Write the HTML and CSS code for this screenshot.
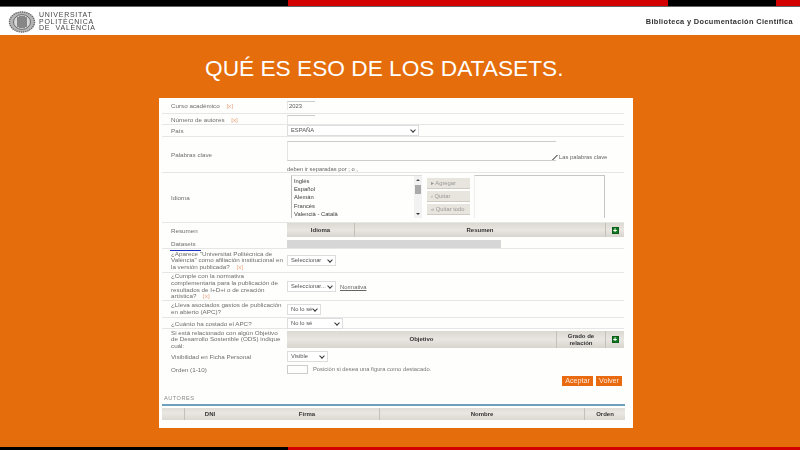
FILE: index.html
```html
<!DOCTYPE html>
<html lang="es">
<head>
<meta charset="utf-8">
<title>Qué es eso de los datasets</title>
<link rel="stylesheet" href="styles.css">
</head>
<body>
<div class="stripe stripe-top"><i class="s-black s1"></i><i class="s-red s2"></i><i class="s-black s3"></i><i class="s-red s4"></i></div>
<header class="brand">
  <svg class="seal" width="28" height="22" viewBox="0 0 28 22">
    <ellipse cx="14" cy="11" rx="13" ry="10.4" fill="#b5b5b5"/>
    <ellipse cx="14" cy="11" rx="12.5" ry="10" fill="none" stroke="#666" stroke-width="1.4" stroke-dasharray="1.2 1"/>
    <ellipse cx="14" cy="11" rx="8.5" ry="7.4" fill="#d8d8d8" stroke="#555" stroke-width=".8"/>
    <path d="M10 6v10M12 5v12M14 5v12M16 5v12M18 6v10" stroke="#444" stroke-width="1.1"/>
  </svg>
  <div class="wordmark"><span>UNIVERSITAT</span><span>POLITÈCNICA</span><span>DE &nbsp;VALÈNCIA</span></div>
  <div class="dept">Biblioteca y Documentación Científica</div>
</header>
<main class="slide">
  <h1>QUÉ ES ESO DE LOS DATASETS.</h1>
  <section class="panel">
    <div class="row h16"><div class="label">Curso académico <em>[x]</em></div><div class="field"><span class="input w28">2023</span></div></div>
    <div class="row h11"><div class="label">Número de autores <em>[x]</em></div><div class="field"><span class="input w28"></span></div></div>
    <div class="row h12"><div class="label">País</div><div class="field"><span class="select w132">ESPAÑA<b></b></span></div></div>
    <div class="row h36">
      <div class="label">Palabras clave</div>
      <div class="field stack">
        <div class="kw"><span class="area"></span><span class="kw-note">Las palabras clave</span></div>
        <span class="hint">deben ir separadas por ; o ,</span>
      </div>
    </div>
    <div class="row h50">
      <div class="label">Idioma</div>
      <div class="field lang">
        <div class="list">
          <div class="opts"><span>Inglés</span><span>Español</span><span>Alemán</span><span>Francés</span><span>Valencià - Català</span></div>
          <div class="scroll"><i></i></div>
        </div>
        <div class="moves"><span class="move">▸ Agregar</span><span class="move">‹ Quitar</span><span class="move">« Quitar todo</span></div>
        <div class="list-right"></div>
      </div>
    </div>
    <div class="row h15 flat">
      <div class="label">Resumen</div>
      <div class="thead">
        <span class="th c-idioma">Idioma</span><span class="th grow">Resumen</span><span class="th c-add"><span class="plus">+</span></span>
      </div>
    </div>
    <div class="row h11"><div class="label"><span class="ds">Datasets</span></div><div class="field"><span class="bar"></span></div></div>
    <div class="row h24"><div class="label tight">¿Aparece "Universitat Politècnica de<br>València" como afiliación institucional en<br>la versión publicada? <em>[x]</em></div><div class="field"><span class="select w49">Seleccionar<b></b></span></div></div>
    <div class="row h28"><div class="label tight">¿Cumple con la normativa<br>complementaria para la publicación de<br>resultados de I+D+i o de creación<br>artística? <em>[x]</em></div><div class="field gap4"><span class="select w49">Seleccionar...<b></b></span><a class="norm">Normativa</a></div></div>
    <div class="row h17"><div class="label tight">¿Lleva asociados gastos de publicación<br>en abierto (APC)?</div><div class="field"><span class="select w34">No lo sé<b></b></span></div></div>
    <div class="row h11"><div class="label">¿Cuánto ha costado el APC?</div><div class="field"><span class="select w56">No lo sé<b></b></span></div></div>
    <div class="row h21 flat">
      <div class="label tight">Si está relacionado con algún Objetivo<br>de Desarrollo Sostenible (ODS) indique<br>cuál:</div>
      <div class="thead tall">
        <span class="th grow">Objetivo</span><span class="th c-grado">Grado de relación</span><span class="th c-add"><span class="plus">+</span></span>
      </div>
    </div>
    <div class="row h12 plain"><div class="label">Visibilidad en Ficha Personal</div><div class="field"><span class="select w41">Visible<b></b></span></div></div>
    <div class="row h14 plain"><div class="label">Orden (1-10)</div><div class="field gap5"><span class="input-box"></span><span class="note">Posición si desea una figura como destacado.</span></div></div>
    <div class="actions"><span class="btn">Aceptar</span><span class="btn">Volver</span></div>
    <h2>AUTORES</h2>
    <div class="authors">
      <span class="ath a0"></span><span class="ath a1">DNI</span><span class="ath a2">Firma</span><span class="ath a3">Nombre</span><span class="ath a4">Orden</span>
    </div>
  </section>
</main>
<div class="stripe stripe-bottom"><i class="s-black s1"></i><i class="s-red grow"></i></div>
</body>
</html>
```

FILE: styles.css
```css
* { box-sizing: border-box; }
html, body { margin: 0; height: 100%; }
body {
  width: 800px; height: 450px; overflow: hidden;
  display: flex; flex-direction: column;
  font-family: "Liberation Sans", Arial, sans-serif;
  background: #e56d0b;
}
.stripe { display: flex; flex: none; }
.stripe i { display: block; }
.stripe-top { height: 7px; border-bottom: 1px solid #666; }
.stripe-bottom { height: 3px; }
.s-black { background: #000; }
.s-red { background: #d20000; }
.s1 { width: 288px; }
.s2 { width: 380px; }
.s3 { width: 108px; }
.s4 { width: 24px; }
.grow { flex: 1; }

.brand {
  flex: none; height: 28px; background: #fff;
  display: flex; align-items: center; padding-left: 8px;
}
.seal { flex: none; margin-top: 2px; }
.wordmark {
  display: flex; flex-direction: column; margin-left: 3px; margin-top: 2px;
  font-size: 7px; line-height: 6.6px; color: #444; letter-spacing: .75px; filter: blur(.3px);
}
.dept {
  margin-left: auto; margin-right: 7px; margin-top: 1px;
  font-size: 7.4px; font-weight: 700; color: #333; letter-spacing: .35px; filter: blur(.3px);
}

.slide { flex: 1; display: flex; flex-direction: column; min-height: 0; }
h1 {
  margin: 19px 0 0 205px; height: 44px;
  font-size: 22.7px; line-height: 28px; font-weight: 400; color: #fff;
}
.panel {
  margin-left: 159px; width: 474px; height: 330px;
  background: #fefefd; padding: 0 9px 0 3px;
  color: #6e6e6e; font-size: 5.8px;
  filter: blur(.35px);
}
.row { display: flex; align-items: center; border-bottom: 1px solid #e6e6e6; }
.row.flat, .row.plain { border-bottom: 0; }
.h11 { height: 11px; } .h12 { height: 12px; } .h14 { height: 14px; }
.h15 { height: 15px; } .h16 { height: 16px; } .h17 { height: 17px; } .h21 { height: 21px; }
.h24 { height: 24px; } .h28 { height: 28px; } .h36 { height: 36px; } .h50 { height: 50px; }
.label { flex: none; width: 125px; padding-left: 9px; font-size: 6.25px; white-space: nowrap; }
.label.tight { line-height: 6.6px; }
.label em { font-style: normal; color: #e8a07a; margin-left: 5px; }
.field { display: flex; align-items: center; flex: 1; min-width: 0; }
.gap4 { gap: 4px; } .gap5 { gap: 5px; }
.stack { flex-direction: column; align-items: flex-start; align-self: flex-start; padding-top: 4px; }

.input { display: block; height: 9px; border-top: 1px solid #ccc; border-left: 1px solid #e6e6e6; color: #555; line-height: 8px; padding-left: 1px; }
.w28 { width: 28px; }
.select {
  position: relative; display: block; height: 11px; line-height: 9px;
  border: 1px solid #ddd; color: #555; padding-left: 3px; background: #fff; white-space: nowrap; overflow: hidden;
}
.select b {
  position: absolute; right: 3px; top: 2px; width: 4px; height: 4px;
  border-right: 1px solid #333; border-bottom: 1px solid #333; transform: rotate(45deg);
}
.w132 { width: 132px; } .w49 { width: 49px; } .w34 { width: 34px; } .w56 { width: 56px; } .w41 { width: 41px; }

.kw { display: flex; align-items: flex-end; height: 20px; }
.area { position: relative; display: block; width: 269px; height: 20px; border: 1px solid #ccc; border-left-color: #e4e4e4; border-right: 0; }
.area::after {
  content: ""; position: absolute; right: -2px; bottom: 0; width: 6px; height: 5px;
  background: linear-gradient(135deg, transparent 45%, #888 45%, #888 60%, transparent 60%);
}
.kw-note { margin-left: 3px; color: #666; line-height: 7px; }
.hint { margin-top: 5px; line-height: 7px; color: #666; }

.lang { align-items: flex-start; align-self: flex-start; padding: 2px 0 0 4px; }
.list { display: flex; width: 131px; height: 43px; border-left: 1px solid #bbb; border-top: 1px solid #ddd; }
.opts { flex: 1; display: flex; flex-direction: column; padding: 1px 0 0 2px; color: #3c3c3c; line-height: 8.2px; }
.scroll { flex: none; width: 8px; background: #f2f2f2; position: relative; }
.scroll i { position: absolute; left: 1px; right: 1px; top: 9px; height: 9px; background: #aaa; }
.scroll::before, .scroll::after {
  content: ""; position: absolute; left: 2px; border-left: 2px solid transparent; border-right: 2px solid transparent;
}
.scroll::before { top: 3px; border-bottom: 2px solid #555; }
.scroll::after { bottom: 3px; border-top: 2px solid #333; }
.moves { flex: none; width: 43px; margin: 3px 0 0 5px; display: flex; flex-direction: column; gap: 2px; }
.move { display: block; height: 11px; line-height: 10px; background: #e8e4de; border-bottom: 1px solid #cfcac3; color: #999; padding-left: 4px; white-space: nowrap; overflow: hidden; }
.list-right { flex: none; width: 131px; height: 43px; margin-left: 4px; border: 1px solid #c6c6c6; border-bottom: 0; border-left-color: #eee; }

.thead { flex: 1; display: flex; height: 14px; margin-bottom: 1px; background: linear-gradient(#dcd8d2, #e9e6e1 50%, #d8d4ce); }
.thead.tall { height: 17px; margin-bottom: 0; }
.th { display: flex; align-items: center; justify-content: center; text-align: center; color: #333; font-weight: 700; font-size: 6px; line-height: 7px; border-right: 1px solid #c4c0ba; }
.th:last-child { border-right: 0; }
.c-idioma { width: 68px; }
.c-grado { width: 49px; }
.c-add { width: 18px; }
.plus { display: block; width: 7px; height: 7px; background: #137a24; color: #fff; font-size: 7px; line-height: 6px; border: 1px solid #0c5c18; }

.ds { position: relative; }
.ds::after { content: ""; position: absolute; left: -1px; right: -5px; bottom: -4px; height: 1px; background: #2233bb; }
.bar { display: block; width: 214px; height: 8px; margin-top: 2px; background: #d6d6d6; }
.norm { color: #666; text-decoration: underline; }
.input-box { display: block; width: 21px; height: 9px; border: 1px solid #ccc; }
.note { color: #777; white-space: nowrap; }

.actions { display: flex; justify-content: flex-end; gap: 3px; padding-right: 2px; }
.btn { display: block; height: 10px; line-height: 10px; padding: 0 3px; background: #ea6a10; color: #fbe8d8; font-size: 7.2px; }
h2 { margin: 8px 0 0 2px; height: 10px; font-size: 5.6px; line-height: 9px; font-weight: 400; color: #888; letter-spacing: .5px; }
.authors {
  width: 463px; height: 16px; border-top: 2px solid #6da0bc; padding-top: 2px; display: flex; background-clip: content-box;
  background-image: linear-gradient(#dcd8d2, #eae7e2 50%, #dcd8d2);
}
.ath { display: flex; align-items: center; justify-content: center; color: #333; font-weight: 700; font-size: 6px; border-right: 1px solid #c4c0ba; }
.ath:last-child { border-right: 0; }
.a0 { width: 23px; }
.a1 { width: 50px; border-right: 0; }
.a2 { width: 145px; }
.a3 { width: 205px; }
.a4 { width: 40px; }
```
